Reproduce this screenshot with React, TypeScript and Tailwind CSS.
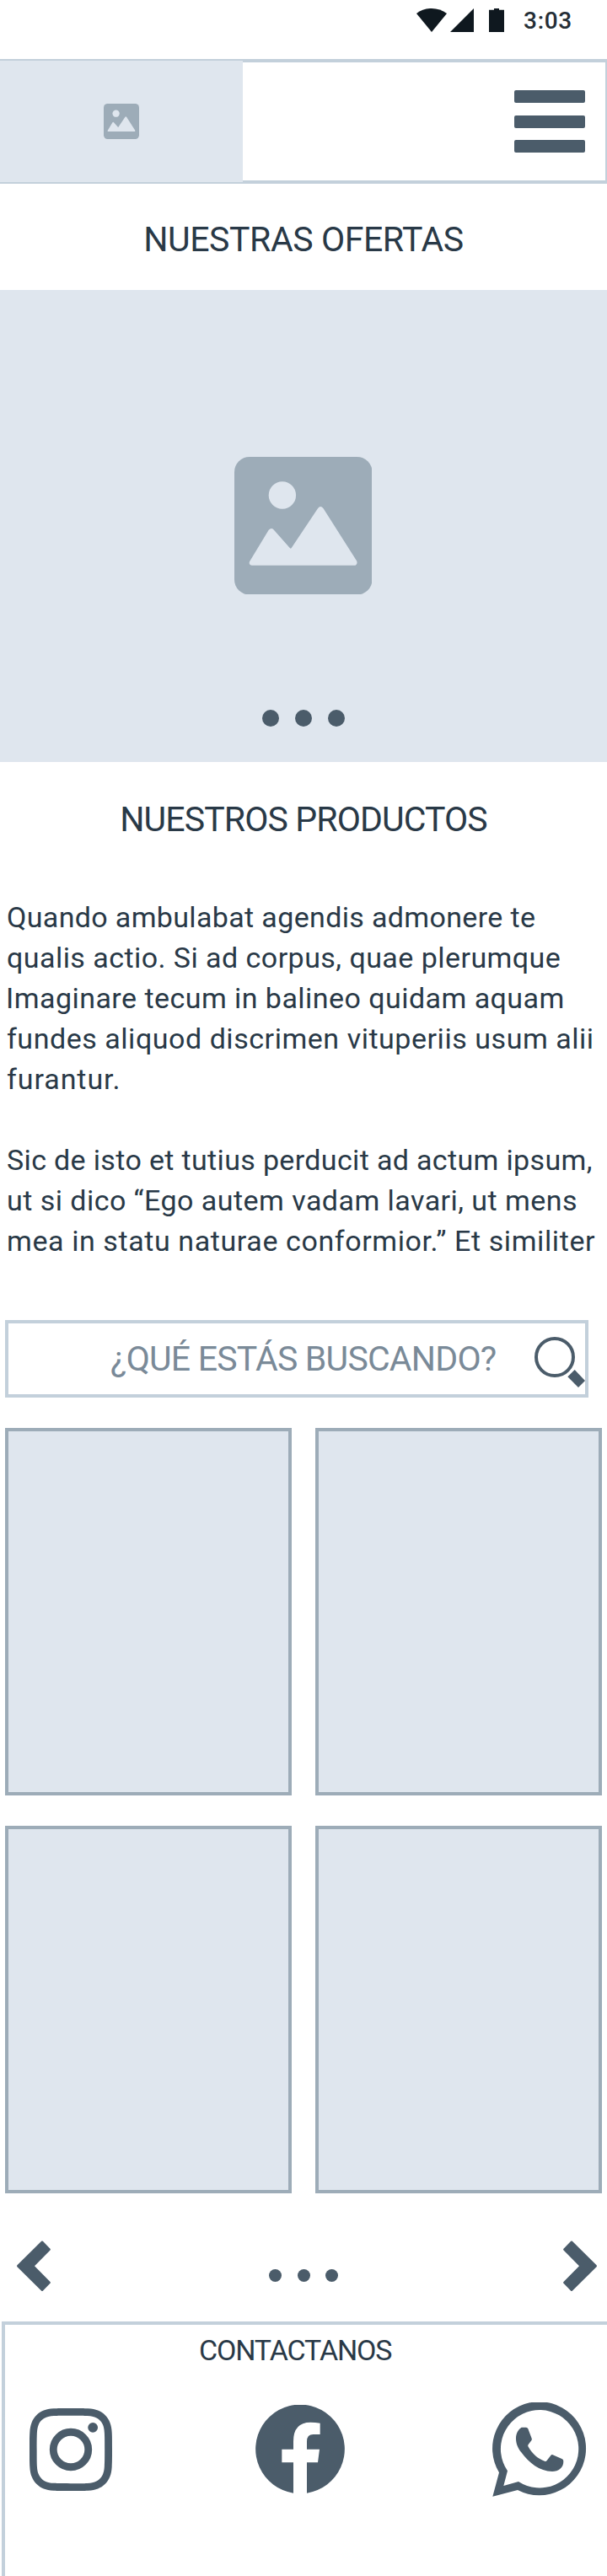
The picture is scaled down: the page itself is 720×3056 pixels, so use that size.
import type { ReactNode } from "react";

function StatusBar() {
  return (
    <div className="flex h-[70px] items-start justify-end pr-[41px] pt-[10px] text-[#0f181f]">
      <svg className="h-7 w-9" viewBox="0 0 36 28" fill="currentColor">
        <path d="M0 6C10-2 26-2 36 6L18 28Z" />
      </svg>
      <svg className="ml-1 h-7 w-7" viewBox="0 0 28 28" fill="currentColor">
        <path d="M28 0V28H0Z" />
      </svg>
      <svg className="ml-[18px] h-7 w-[18px]" viewBox="0 0 18 28" fill="currentColor">
        <path d="M6 0H12V1.7H18V28H0V1.7H6Z" />
      </svg>
      <span className="ml-[23px] text-[28px] font-medium leading-[29px] tracking-[0.7px] text-[#252e36]">3:03</span>
    </div>
  );
}

function ImagePlaceholder({ className }: { className: string }) {
  return (
    <svg className={className} viewBox="112 123 490 490">
      <rect x="112" y="123" width="490" height="490" rx="54" fill="#9dacb8" />
      <g fill="#dfe6ee">
        <circle cx="282.500" cy="259.500" r="48.500" />
        <path d="M166 495L234 383Q243 373 252 382L309 447Q312 451 315 447L409 306Q418 293 428 306L547 493Q551 503 542 509H174Q162 506 166 495Z" />
      </g>
    </svg>
  );
}

function Header() {
  return (
    <header className="flex h-[148px] items-center justify-between border-y-4 border-r-2 border-[#c3d0db]">
      <div className="-my-[2px] flex h-36 w-72 items-center justify-center bg-[#dfe6ee]">
        <ImagePlaceholder className="h-[42px] w-[42px]" />
      </div>
      <div className="mr-6 flex flex-col gap-[14.500px]">
        <div className="h-[15px] w-[84.500px] rounded-[2px] bg-[#4b5c6a]" />
        <div className="h-[15px] w-[84.500px] rounded-[2px] bg-[#4b5c6a]" />
        <div className="h-[15px] w-[84.500px] rounded-[2px] bg-[#4b5c6a]" />
      </div>
    </header>
  );
}

function Heading({ className, children }: { className: string; children: ReactNode }) {
  return (
    <h2 className={"text-center text-[41px] leading-[60px] whitespace-nowrap " + className}>{children}</h2>
  );
}

function Hero() {
  return (
    <section className="flex h-[560px] flex-col items-center bg-[#dfe6ee] pt-[197.500px]">
      <ImagePlaceholder className="mr-[1.500px] h-[163.500px] w-[163.500px]" />
      <div className="mt-[137px] flex gap-[19px]">
        <span className="h-5 w-5 rounded-full bg-[#4b5c6a]" />
        <span className="h-5 w-5 rounded-full bg-[#4b5c6a]" />
        <span className="h-5 w-5 rounded-full bg-[#4b5c6a]" />
      </div>
    </section>
  );
}

function Description() {
  return (
    <div className="mt-[62px] pl-[8px] text-[34px] leading-[48px] whitespace-nowrap">
      <p className="tracking-[0.347px]">Quando ambulabat agendis admonere te</p>
      <p className="tracking-[0.451px]">qualis actio. Si ad corpus, quae plerumque</p>
      <p className="-ml-[1px] tracking-[0.452px]">Imaginare tecum in balineo quidam aquam</p>
      <p className="tracking-[0.535px]">fundes aliquod discrimen vituperiis usum alii</p>
      <p className="tracking-[0.933px]">furantur.</p>
      <p className="mt-12 tracking-[0.345px]">Sic de isto et tutius perducit ad actum ipsum,</p>
      <p className="tracking-[0.455px]">ut si dico “Ego autem vadam lavari, ut mens</p>
      <p className="tracking-[0.589px]">mea in statu naturae conformior.” Et similiter</p>
    </div>
  );
}

function Search() {
  return (
    <div className="ml-[6px] mt-[70px] flex h-[92px] w-[692px] items-center justify-between border-4 border-[#c3d0db] pl-[121px]">
      <span className="text-[41px] leading-[60px] tracking-[-0.786px] whitespace-nowrap text-[#7a8a98]">
        ¿QUÉ ESTÁS BUSCANDO?
      </span>
      <svg className="mt-2 h-[60px] w-[60px]" viewBox="102 108 180 180">
        <circle cx="174" cy="180" r="66" fill="none" stroke="#4b5c6a" strokeWidth="12" />
        <path d="M245 225L282 264L258 288L220 250Z" fill="#4b5c6a" />
      </svg>
    </div>
  );
}

function ProductGrid() {
  return (
    <div className="mt-9 grid grid-cols-2 gap-x-7 gap-y-9 px-[6px]">
      {[1, 2, 3, 4].map((id) => (
        <div key={id} className="h-[436px] border-4 border-[#9dacb8] bg-[#dfe6ee]" />
      ))}
    </div>
  );
}

function Pager() {
  return (
    <div className="flex h-[152px] items-start justify-between pl-5 pr-3 pt-[55.500px] text-[#4b5c6a]">
      <svg className="h-[60.500px] w-10" viewBox="0 0 40 60" fill="currentColor">
        <path d="M29.200.6Q30 0 30.800.6L39.500 9.500Q40.300 10.300 39.500 11.200L21 30L39.500 48.800Q40.300 49.700 39.500 50.500L30.800 59.400Q30 60 29.200 59.400L.4 31Q-.3 30 .4 29Z" />
      </svg>
      <div className="mr-2 mt-[34.500px] flex gap-[18.200px]">
        <span className="h-[15px] w-[15px] rounded-full bg-[#4b5c6a]" />
        <span className="h-[15px] w-[15px] rounded-full bg-[#4b5c6a]" />
        <span className="h-[15px] w-[15px] rounded-full bg-[#4b5c6a]" />
      </div>
      <svg className="h-[60.500px] w-10 -scale-x-100" viewBox="0 0 40 60" fill="currentColor">
        <path d="M29.200.6Q30 0 30.800.6L39.500 9.500Q40.300 10.300 39.500 11.200L21 30L39.500 48.800Q40.300 49.700 39.500 50.500L30.800 59.400Q30 60 29.200 59.400L.4 31Q-.3 30 .4 29Z" />
      </svg>
    </div>
  );
}

function InstagramIcon() {
  return (
    <svg className="h-[98px] w-[98px]" viewBox="0 0 24 24" fill="currentColor">
      <path d="M12 0C8.740 0 8.333.015 7.053.072 5.775.132 4.905.333 4.140.63c-.789.306-1.459.717-2.126 1.384S.935 3.350.63 4.140C.333 4.905.131 5.775.072 7.053.012 8.333 0 8.740 0 12s.015 3.667.072 4.947c.06 1.277.261 2.148.558 2.913.306.788.717 1.459 1.384 2.126.667.666 1.336 1.079 2.126 1.384.766.296 1.636.499 2.913.558C8.333 23.988 8.740 24 12 24s3.667-.015 4.947-.072c1.277-.06 2.148-.262 2.913-.558.788-.306 1.459-.718 2.126-1.384.666-.667 1.079-1.335 1.384-2.126.296-.765.499-1.636.558-2.913.06-1.280.072-1.687.072-4.947s-.015-3.667-.072-4.947c-.06-1.277-.262-2.149-.558-2.913-.306-.789-.718-1.459-1.384-2.126C21.319 1.347 20.651.935 19.860.63c-.765-.297-1.636-.499-2.913-.558C15.667.012 15.260 0 12 0zm0 2.160c3.203 0 3.585.016 4.850.071 1.170.055 1.805.249 2.227.415.562.217.96.477 1.382.896.419.42.679.819.896 1.381.164.422.36 1.057.413 2.227.057 1.266.07 1.646.07 4.850s-.015 3.585-.074 4.850c-.061 1.170-.256 1.805-.421 2.227-.224.562-.479.96-.899 1.382-.419.419-.824.679-1.380.896-.42.164-1.065.36-2.235.413-1.274.057-1.649.07-4.859.07-3.211 0-3.586-.015-4.859-.074-1.171-.061-1.816-.256-2.236-.421-.569-.224-.96-.479-1.379-.899-.421-.419-.69-.824-.9-1.380-.165-.42-.359-1.065-.42-2.235-.045-1.260-.061-1.649-.061-4.844 0-3.196.016-3.586.061-4.861.061-1.170.255-1.814.42-2.234.21-.57.479-.96.9-1.381.419-.419.81-.689 1.379-.898.42-.166 1.051-.361 2.221-.421 1.275-.045 1.650-.06 4.859-.06z" />
      <circle cx="12" cy="12" r="5.080" fill="none" stroke="currentColor" strokeWidth="2.160" />
      <circle cx="18.406" cy="5.595" r="1.440" />
    </svg>
  );
}

function FacebookIcon() {
  return (
    <svg className="h-[106px] w-[106px]" viewBox="909 340 318 318" fill="currentColor">
      <path d="M1044 654A158.500 158.500 0 1 1 1092 654V545H1131L1137 498H1092V470Q1092 445 1115 445H1139V405Q1122 402 1105 402Q1044 402 1044 470V498H1003V545H1044Z" />
    </svg>
  );
}

function WhatsAppIcon() {
  return (
    <svg className="h-[112px] w-[112px]" viewBox="552 330 336 336" fill="currentColor">
      <path
        fillRule="evenodd"
        d="M553 665L576 580A166.500 166.500 0 1 1 642 642ZM592 627L645 612A138.500 138.500 0 1 0 606 574Z"
      />
      <path d="M656 419H672Q677 419 679 424L692 458Q694 462 691 466L680 480Q677 484 680 488C696 515 714 530 738 539Q743 541 746 537L760 519Q763 515 767 517L801 532Q805 534 805 539C806 562 787 576 765 576C720 576 682 545 655 508C643 492 636 477 636 458C636 440 645 425 656 419Z" />
    </svg>
  );
}

function Footer() {
  return (
    <footer className="ml-[2px] h-[302px] border-l-4 border-t-4 border-[#c3d0db] pt-[6px]">
      <p className="ml-[230px] text-[34px] leading-[48px] tracking-[-1.142px]">CONTACTANOS</p>
      <div className="mt-[38px] flex items-center justify-between pl-[29px] pr-6 text-[#4b5c6a]">
        <InstagramIcon />
        <div className="mr-[4.500px]">
          <FacebookIcon />
        </div>
        <WhatsAppIcon />
      </div>
    </footer>
  );
}

export default function App() {
  return (
    <main className="h-[3056px] w-[720px] overflow-hidden bg-white font-['Roboto',sans-serif] text-[#293947]">
      <StatusBar />
      <Header />
      <div className="h-[126px] pt-9">
        <Heading className="tracking-[-0.422px]">NUESTRAS OFERTAS</Heading>
      </div>
      <Hero />
      <Heading className="mt-[38px] tracking-[-0.875px]">NUESTROS PRODUCTOS</Heading>
      <Description />
      <Search />
      <ProductGrid />
      <Pager />
      <Footer />
    </main>
  );
}
